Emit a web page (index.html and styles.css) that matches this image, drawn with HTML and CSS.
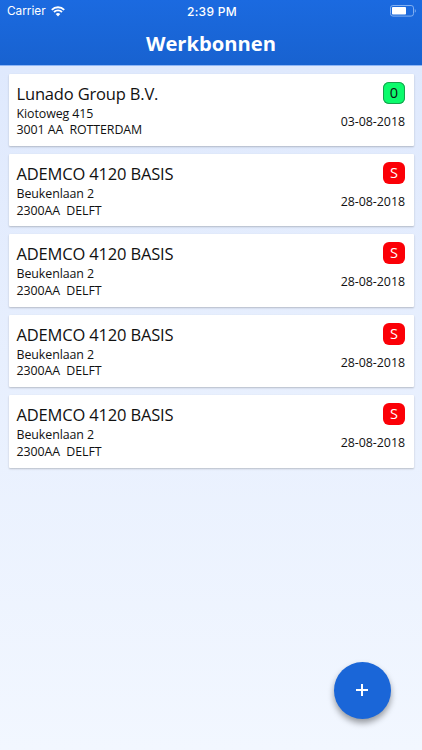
FILE: index.html
```html
<!DOCTYPE html>
<html lang="nl">
<head>
  <meta charset="UTF-8">
  <meta name="viewport" content="width=device-width, initial-scale=1.0">
  <title>Werkbonnen</title>
  <link rel="stylesheet" href="styles.css">
</head>
<body>
  <!-- Header -->
  <header class="header">
    <div class="status-bar">
      <div class="carrier">
        <span>Carrier</span>
        <svg class="wifi" viewBox="0 0 14 11" width="14" height="11">
          <path d="M0.8 3.8 A8.8 8.8 0 0 1 13.2 3.8" />
          <path d="M3 6 A5.7 5.7 0 0 1 11 6" />
          <path class="wifi-dot" d="M7 10.4 L4.7 8.1 A3.3 3.3 0 0 1 9.3 8.1 Z" />
        </svg>
      </div>
      <span class="time">2:39 PM</span>
      <div class="battery-wrap">
        <svg viewBox="0 0 27 12" width="27" height="12">
          <rect class="battery-case" x="0.5" y="0.5" width="23" height="10.6" rx="2.4" />
          <rect class="battery-level" x="2" y="2" width="14" height="7.6" rx="0.8" />
          <path class="battery-tip" d="M24.8 4 C26.2 4.4 26.2 7.4 24.8 7.8 Z" />
        </svg>
      </div>
    </div>
    <h1>Werkbonnen</h1>
  </header>

  <!-- Work orders -->
  <main class="list">
    <div class="card">
      <div class="info">
        <h2>Lunado Group B.V.</h2>
        <p>Kiotoweg 415</p>
        <p>3001 AA&nbsp; ROTTERDAM</p>
      </div>
      <div class="side">
        <span class="badge open">0</span>
        <span class="date">03-08-2018</span>
      </div>
    </div>
    <div class="card">
      <div class="info">
        <h2>ADEMCO 4120 BASIS</h2>
        <p>Beukenlaan 2</p>
        <p>2300AA&nbsp; DELFT</p>
      </div>
      <div class="side">
        <span class="badge">S</span>
        <span class="date">28-08-2018</span>
      </div>
    </div>
    <div class="card">
      <div class="info">
        <h2>ADEMCO 4120 BASIS</h2>
        <p>Beukenlaan 2</p>
        <p>2300AA&nbsp; DELFT</p>
      </div>
      <div class="side">
        <span class="badge">S</span>
        <span class="date">28-08-2018</span>
      </div>
    </div>
    <div class="card">
      <div class="info">
        <h2>ADEMCO 4120 BASIS</h2>
        <p>Beukenlaan 2</p>
        <p>2300AA&nbsp; DELFT</p>
      </div>
      <div class="side">
        <span class="badge">S</span>
        <span class="date">28-08-2018</span>
      </div>
    </div>
    <div class="card">
      <div class="info">
        <h2>ADEMCO 4120 BASIS</h2>
        <p>Beukenlaan 2</p>
        <p>2300AA&nbsp; DELFT</p>
      </div>
      <div class="side">
        <span class="badge">S</span>
        <span class="date">28-08-2018</span>
      </div>
    </div>
  </main>

  <!-- Add button -->
  <button class="add-btn" aria-label="Toevoegen">
    <svg viewBox="0 0 12 12" width="12" height="12">
      <path d="M6 0 V12 M0 6 H12" />
    </svg>
  </button>
</body>
</html>
```
FILE: styles.css
```css
/* General Styles */
* {
  box-sizing: border-box;
}

body {
  font-family: "Open Sans", sans-serif;
  margin: 0;
  height: 750px;
  overflow: hidden;
  color: #111;
  background: linear-gradient(#dfe9fd 66px, #f2f7ff 750px);
}

h1,
h2,
p {
  margin: 0;
}

/* Header */
.header {
  height: 66px;
  color: #fff;
  background: linear-gradient(#1b6ae0, #1862d0);
  border-bottom: 1px solid #8fb6f5;
}

.status-bar {
  display: grid;
  grid-template-columns: 1fr auto 1fr;
  align-items: center;
  height: 22px;
  padding: 0 5px 0 7px;
  font-family: Inter, sans-serif;
  font-size: 12px;
}

.carrier {
  display: flex;
  align-items: center;
  gap: 5px;
  font-size: 11.8px;
}

.wifi path {
  fill: none;
  stroke: #fff;
  stroke-width: 1.9;
}

.wifi .wifi-dot {
  fill: #fff;
  stroke: none;
}

.time {
  font-weight: 500;
  letter-spacing: 0.3px;
}

.battery-wrap {
  display: flex;
  justify-content: flex-end;
}

.battery-case {
  fill: none;
  stroke: #82aff0;
}

.battery-level {
  fill: #fff;
}

.battery-tip {
  fill: #82aff0;
}

h1 {
  font-size: 20.2px;
  line-height: 43px;
  font-weight: bold;
  text-align: center;
}

/* Cards */
.list {
  display: flex;
  flex-direction: column;
  gap: 8px;
  padding: 7.6px 8.5px;
}

.card {
  display: flex;
  justify-content: space-between;
  height: 72.4px;
  padding: 8px 8.5px 8px 8px;
  background: #fff;
  border-radius: 1px;
  box-shadow: 0 1px 2px rgba(0, 0, 0, 0.22);
}

h2 {
  font-size: 16.5px;
  line-height: 24px;
  font-weight: normal;
  letter-spacing: -0.17px;
}

p {
  font-size: 12.4px;
  line-height: 16.6px;
  letter-spacing: -0.08px;
}

.side {
  display: flex;
  flex-direction: column;
  align-items: flex-end;
}

.badge {
  width: 22px;
  height: 22px;
  border-radius: 6px;
  background: #fb0007;
  color: #fff;
  font-size: 14.5px;
  line-height: 22px;
  text-align: center;
}

.badge.open {
  background: #0bfb6c;
  color: #111;
  box-shadow: inset 0 0 0 1px #18a04e;
}

.date {
  margin-top: 9px;
  font-size: 12.4px;
  line-height: 17px;
  letter-spacing: -0.04px;
}

/* Add button */
.add-btn {
  position: absolute;
  left: 334px;
  top: 662px;
  display: flex;
  align-items: center;
  justify-content: center;
  width: 57px;
  height: 57px;
  padding: 0 1px 1px 0;
  border: none;
  border-radius: 50%;
  background: #1a66d8;
  box-shadow: 0 4px 6px rgba(0, 0, 0, 0.38);
}

.add-btn path {
  stroke: #fff;
  stroke-width: 2;
}
```
